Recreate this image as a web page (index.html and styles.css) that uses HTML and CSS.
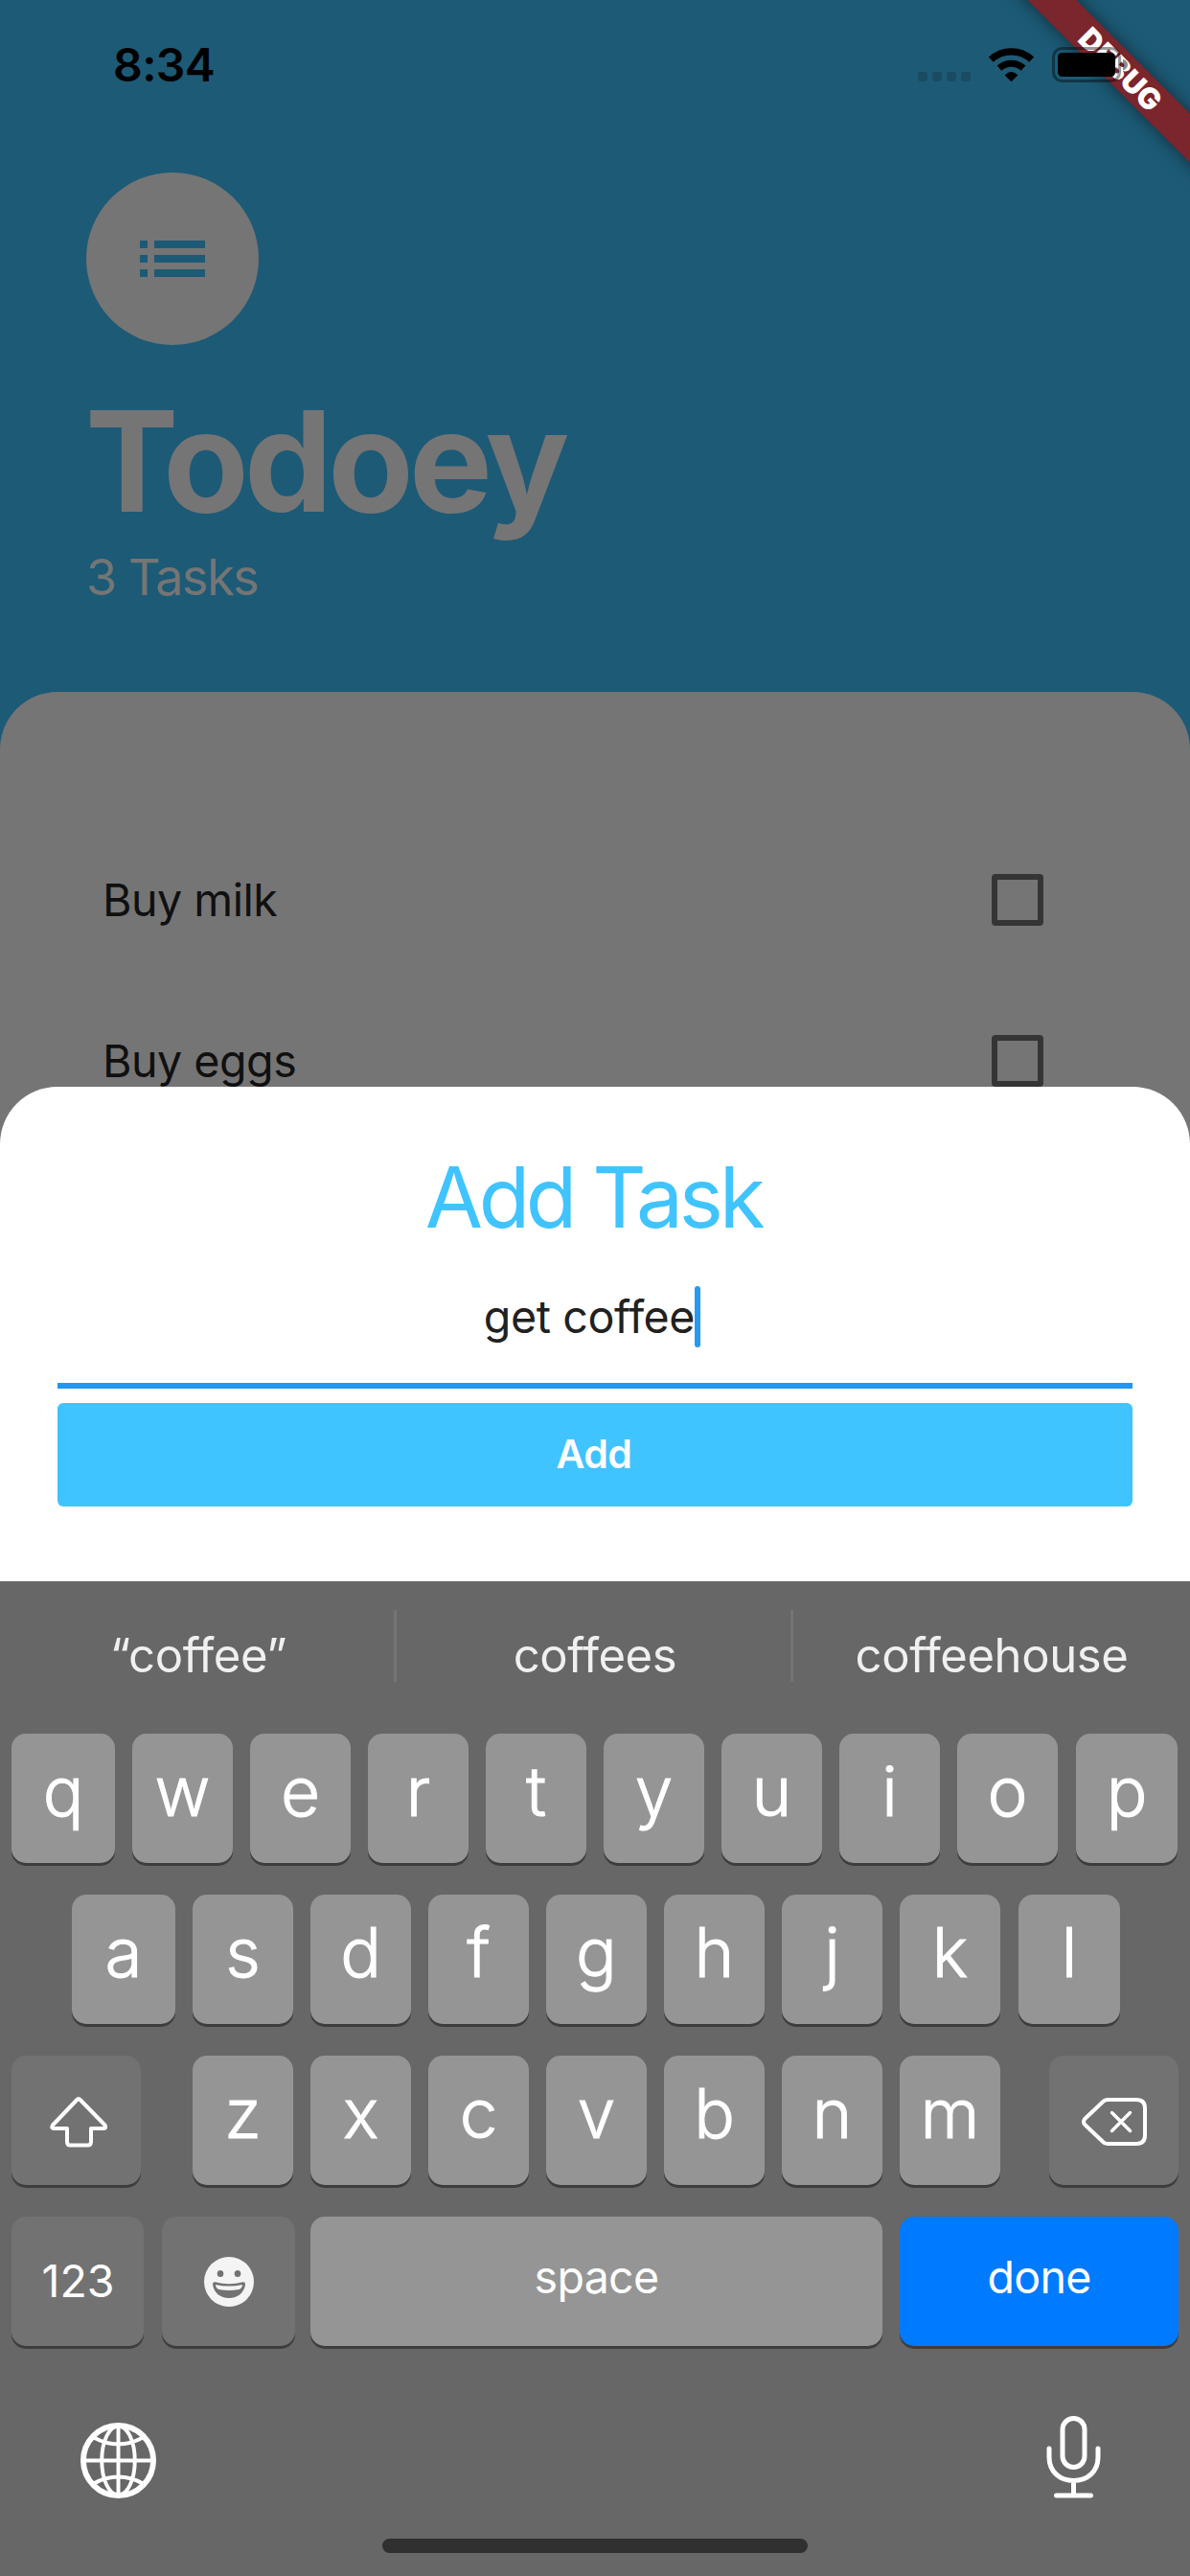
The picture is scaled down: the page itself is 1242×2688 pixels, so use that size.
FILE: index.html
```html
<!DOCTYPE html>
<html lang="en">
<head>
<meta charset="utf-8">
<title>Todoey</title>
<link rel="stylesheet" href="styles.css">
</head>
<body>
<main class="app">
  <header class="header">
    <div class="status">
      <span class="clock">8:34</span>
    </div>
    <div class="avatar">
      <svg width="68" height="38" viewBox="0 0 68 38" fill="#1d5a76"><path d="M0 0h8v8H0zM15 0h53v8H15zM0 15h8v8H0zM15 15h53v8H15zM0 30h8v8H0zM15 30h53v8H15z"/></svg>
    </div>
    <h1 class="title"><span>Todoey</span></h1>
    <p class="count"><span>3 Tasks</span></p>
  </header>
  <section class="tasks">
    <div class="task"><span>Buy milk</span><i class="box"></i></div>
    <div class="task"><span>Buy eggs</span><i class="box"></i></div>
  </section>
  <section class="sheet">
    <h2 class="sheet-title"><span>Add Task</span></h2>
    <div class="field"><span class="value">get coffee</span><i class="caret"></i></div>
    <div class="add"><span>Add</span></div>
  </section>
  <section class="keyboard">
    <div class="suggestions">
      <div class="sug"><span>“coffee”</span></div><div class="sug"><span>coffees</span></div><div class="sug"><span>coffeehouse</span></div>
    </div>
    <div class="row row1"><b class="key">q</b><b class="key">w</b><b class="key">e</b><b class="key">r</b><b class="key">t</b><b class="key">y</b><b class="key">u</b><b class="key">i</b><b class="key">o</b><b class="key">p</b></div>
    <div class="row row2"><b class="key">a</b><b class="key">s</b><b class="key">d</b><b class="key">f</b><b class="key">g</b><b class="key">h</b><b class="key">j</b><b class="key">k</b><b class="key">l</b></div>
    <div class="row row3">
      <b class="key dark shift"><svg width="60" height="53" viewBox="0 0 60 53" fill="none" stroke="#fff" stroke-width="4" stroke-linejoin="round"><path d="M28.400 3 3 29.500q-2 3.500 1.500 3.500H18v14q0 3.500 3.500 3.500h18q3.500 0 3.500-3.500V33h13q3.500 0 1.500-3.500L31.600 3q-1.600-1.600-3.200 0z"/></svg></b>
      <div class="letters"><b class="key">z</b><b class="key">x</b><b class="key">c</b><b class="key">v</b><b class="key">b</b><b class="key">n</b><b class="key">m</b></div>
      <b class="key dark del"><svg width="68" height="50" viewBox="0 0 68 50" fill="none" stroke="#fff" stroke-width="4" stroke-linejoin="round" stroke-linecap="round"><path d="M27 2h30q9 0 9 9v28q0 9-9 9H27q-3 0-5-2.200L3.200 28q-2.400-3 0-6L22 4.200Q24 2 27 2z"/><path d="M31.500 15.500l19 19M50.500 15.500l-19 19" stroke-width="3.500"/></svg></b>
    </div>
    <div class="row row4">
      <b class="key dark num"><span>123</span></b>
      <b class="key dark emoji"><svg width="52" height="52" viewBox="0 0 52 52"><circle cx="26" cy="26" r="26" fill="#f4f4f4"/><ellipse cx="17" cy="17.500" rx="3.300" ry="3.600" fill="#727272"/><ellipse cx="35" cy="17.500" rx="3.300" ry="3.600" fill="#727272"/><path d="M11.500 26.200q14.500 4 29 0 2.500-.3 2.500 2.300C42 37.500 35 43 26 43S10 37.500 9 28.500q0-2.600 2.500-2.300z" fill="#727272"/><path d="M12 29q14 3.200 28 0 0 4.500-5 5.300-9 1.200-18 0-5-.8-5-5.300z" fill="#f4f4f4"/></svg></b>
      <b class="key space"><span>space</span></b>
      <b class="key done"><span>done</span></b>
    </div>
    <div class="tools">
      <svg width="79" height="79" viewBox="0 0 80 80" fill="none" stroke="#fff" stroke-width="4"><circle cx="40" cy="40" r="37" stroke-width="6"/><path d="M40 3v74M3 40h74M13.500 15.500Q40 30 66.500 15.500M13.500 64.500Q40 50 66.500 64.500"/><ellipse cx="40" cy="40" rx="17.500" ry="36.500"/></svg>
      <svg width="57" height="86" viewBox="0 0 57 86" fill="none" stroke="#fff" stroke-width="5" stroke-linecap="round"><rect x="17" y="2.500" width="23" height="51" rx="11.500"/><path d="M3 34v9c0 15 11 24.500 25.500 24.500S54 58 54 43v-9M28.500 68v14M10.500 83h36"/></svg>
    </div>
    <div class="home"></div>
  </section>
  <div class="banner"><span>DEBUG</span></div>
  <svg class="status-icons" width="225" height="40" viewBox="957 48 225 40">
    <g fill="#1a4b61"><rect x="958" y="75" width="10" height="10" rx="3"/><rect x="973" y="75" width="10" height="10" rx="3"/><rect x="988" y="75" width="10" height="10" rx="3"/><rect x="1003" y="75" width="10" height="10" rx="3"/></g>
    <g fill="none" stroke="#000"><path d="M1034.300 62.200a31 31 0 0 1 42.400 0" stroke-width="7.200"/><path d="M1043 71.200a18.500 18.500 0 0 1 25 0" stroke-width="7"/></g>
    <path d="M1055.500 85.200l-6.800-6.800q6.800-6.800 13.600 0z"/>
    <rect x="1099.500" y="50.500" width="69" height="34" rx="9" fill="none" stroke="#000" stroke-opacity=".4" stroke-width="3"/>
    <rect x="1104" y="55" width="60" height="25" rx="4.500"/>
    <path d="M1172 61.500q5 2 5 6t-5 6z" fill="#000" fill-opacity=".45"/>
  </svg>
</main>
</body>
</html>
```

FILE: styles.css
```css
* { box-sizing: border-box; margin: 0; padding: 0; }
body { width: 1242px; height: 2688px; overflow: hidden; font-family: Inter, "Liberation Sans", sans-serif; font-feature-settings: "calt" 0; }
.app { position: relative; display: flex; flex-direction: column; width: 1242px; height: 2688px; overflow: hidden; background: #1d5a76; }
span { white-space: nowrap; }
.header { height: 722px; flex: none; color: #757575; }
.status { height: 180px; padding: 38px 0 0 118px; color: #000; }
.clock { display: block; font-size: 48px; line-height: 60px; font-weight: 600; letter-spacing: -.6px; }
.avatar { display: flex; align-items: center; justify-content: center; width: 180px; height: 180px; margin-left: 90px; border-radius: 50%; background: #757575; }
.title { height: 180px; margin: 31px 0 0 89px; font-size: 146px; line-height: 180px; font-weight: 700; letter-spacing: -4.8px; }
.count { height: 64px; margin: -1px 0 0 90px; font-size: 52.4px; line-height: 64px; letter-spacing: -1.6px; }

/* The list runs on behind the rounded top of the sheet. */
.tasks { flex: none; height: 472px; margin-bottom: -60px; padding-top: 133px; border-radius: 60px 60px 0 0; background: #757575; overflow: hidden; }
.task { display: flex; align-items: center; justify-content: space-between; height: 168px; padding: 0 153px 0 107px; font-size: 46.6px; letter-spacing: -.5px; color: #101010; }
.box { width: 54px; height: 54px; border: 6px solid #353535; border-radius: 4px; }

.sheet { position: relative; flex: none; height: 516px; padding: 60px 60px 0; border-radius: 60px 60px 0 0; background: #fff; }
.sheet-title { height: 110px; text-align: center; font-size: 87.4px; line-height: 110px; font-weight: 400; letter-spacing: -4.3px; text-indent: -4px; color: #40c4ff; }
.field { display: flex; align-items: center; justify-content: center; height: 145px; border-bottom: 6px solid #2196f3; font-size: 46.6px; color: #212121; }
.value { letter-spacing: -.4px; }
.caret { width: 6px; height: 64px; margin-right: 6px; border-radius: 3px; background: #2898f3; }
.add { display: flex; align-items: center; justify-content: center; height: 108px; margin-top: 15px; padding: 0 2px 2px 0; border-radius: 6px; background: #40c4ff; color: #fff; font-size: 41px; font-weight: 600; letter-spacing: -.5px; }

.keyboard { flex: none; height: 1038px; background: #676767; }
.suggestions { display: grid; grid-template-columns: 1fr 1fr 1fr; height: 159px; padding-top: 30px; }
.sug { height: 75px; padding-top: 15px; text-align: center; font-size: 49px; line-height: 66px; letter-spacing: -.4px; color: #f0f0f0; }
.sug + .sug { border-left: 3px solid #747474; margin-left: -3px; }
.row { display: flex; gap: 18px; height: 135px; margin-bottom: 33px; padding: 0 12px; }
.key { display: flex; align-items: center; justify-content: center; width: 105px; height: 135px; border-radius: 15px; background: #959595; box-shadow: 0 3px 0 #3d3d3d; color: #fff; font-size: 71px; line-height: 87px; font-weight: 300; -webkit-text-stroke: 1px #fff; padding-bottom: 14px; }
.row1 .key:first-child, .row2 .key:first-child { width: 108px; }
.row1 .key:last-child, .row2 .key:last-child { width: 106px; margin-left: 1px; }
.row2 { padding-left: 75px; }
.row3 { justify-content: space-between; gap: 0; }
.letters { display: flex; gap: 18px; margin-left: 3px; }
.row .dark { background: #727272; }
.row3 .dark { width: 135px; padding: 3px 0 0; }
.row3 .shift { padding: 3px 0 0 4px; }
.row4 { gap: 0; }
.row4 .key { font-size: 46.5px; font-weight: 400; -webkit-text-stroke: 0; }
.row4 .num { width: 138px; padding: 0 0 0 1px; margin-right: 19px; }
.row4 .emoji { width: 139px; padding: 0; margin-right: 16px; }
.row4 .space { width: 597px; margin-right: 18px; padding-bottom: 8px; letter-spacing: -.7px; }
.row4 .done { width: 291px; padding: 0 0 8px; letter-spacing: -.7px; background: #007aff; }
.tools { display: flex; justify-content: space-between; align-items: flex-end; height: 126px; padding: 0 93px 0 84px; }
.home { width: 444px; height: 15px; margin: 42px auto 0; border-radius: 8px; background: #303030; }

.banner { position: absolute; left: 990px; top: 53.5px; width: 360px; height: 36px; display: flex; align-items: center; justify-content: center; background: #7b252d; color: #fff; font-size: 31px; font-weight: 900; transform: rotate(45deg); box-shadow: 0 0 18px rgba(0,0,0,.5); }
.status-icons { position: absolute; left: 957px; top: 48px; }
```
